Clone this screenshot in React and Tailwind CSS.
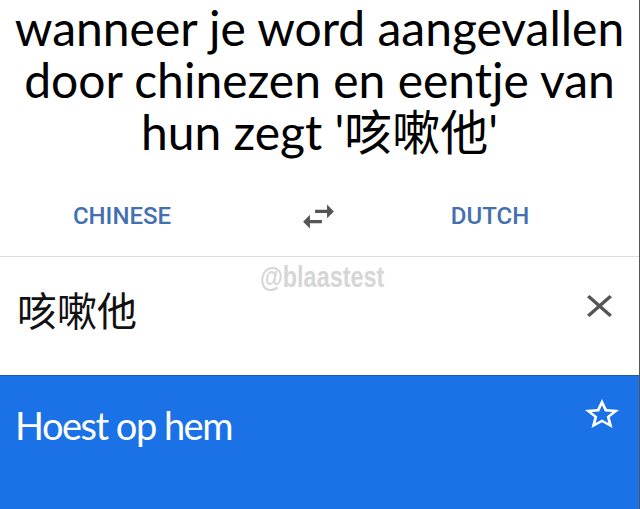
import React from 'react';

const SwapIcon = () => (
    <svg width="41" height="41" viewBox="0 0 24 24" fill="#555555">
        <path d="M6.99 11L3 15l3.99 4v-3H14v-2H6.99v-3zM21 9l-3.99-4v3H10v2h7.01v3L21 9z" />
    </svg>
);

const CloseIcon = () => (
    <svg width="25" height="22" viewBox="5 5 14 14" preserveAspectRatio="none" fill="#555555">
        <path d="M19 6.41L17.59 5 12 10.59 6.41 5 5 6.41 10.59 12 5 17.59 6.41 19 12 13.41 17.59 19 19 17.59 13.41 12z" />
    </svg>
);

const StarIcon = () => (
    <svg width="34" height="29" viewBox="2 2 20 19" preserveAspectRatio="none" fill="#ffffff">
        <path d="M22 9.24l-7.19-.62L12 2 9.19 8.63 2 9.24l5.46 4.73L5.82 21 12 17.27 18.18 21l-1.63-7.03L22 9.24zM12 15.4l-3.76 2.27 1-4.28-3.32-2.88 4.38-.38L12 6.1l1.71 4.04 4.38.38-3.32 2.88 1 4.28L12 15.4z" />
    </svg>
);

const App = () => {
    return (
        <div className="w-[640px] h-[509px] flex flex-col bg-white overflow-hidden border-r border-[#555]">
            {/* Meme caption */}
            <div className="h-[176px] pt-[2px] text-center text-black text-[48px] leading-[52px] font-['Lato','Noto_Sans_CJK_SC',sans-serif]">
                <p>wanneer je word aangevallen</p>
                <p>door chinezen en eentje van</p>
                <p>hun zegt '咳嗽他'</p>
            </div>

            {/* Language bar */}
            <div className="h-[80px] flex items-center text-[24px] font-medium text-[#4470b0] font-['Roboto',sans-serif]">
                <div className="w-[244px] text-center">CHINESE</div>
                <div className="w-[148px] flex justify-center">
                    <SwapIcon />
                </div>
                <div className="w-[196px] text-center">DUTCH</div>
            </div>
            <div className="h-px bg-[#dddddd]" />

            {/* Input */}
            <div className="relative h-[118px] flex items-start justify-between pt-[32px] pl-[17px] pr-[27px]">
                <p className="text-[40px] leading-[40px] text-[#111] font-['Noto_Sans_CJK_SC',sans-serif]">咳嗽他</p>
                <div className="mt-[6px]">
                    <CloseIcon />
                </div>
                <span className="absolute left-[260px] top-[0px] origin-left scale-x-[0.78] text-[30px] leading-[40px] font-bold text-[#d6d6d6] font-['Liberation_Sans',sans-serif]">
                    @blaastest
                </span>
            </div>

            {/* Translation */}
            <div className="flex-1 bg-[#1a72e6] border-t border-[#1d5cb0] flex items-start justify-between pt-[25px] pl-[15px] pr-[20px]">
                <p className="text-[38px] leading-[48px] tracking-[-1.5px] text-white font-['Lato',sans-serif]">Hoest op hem</p>
                <div className="-mt-[2px]">
                    <StarIcon />
                </div>
            </div>
        </div>
    );
};

export default App;
